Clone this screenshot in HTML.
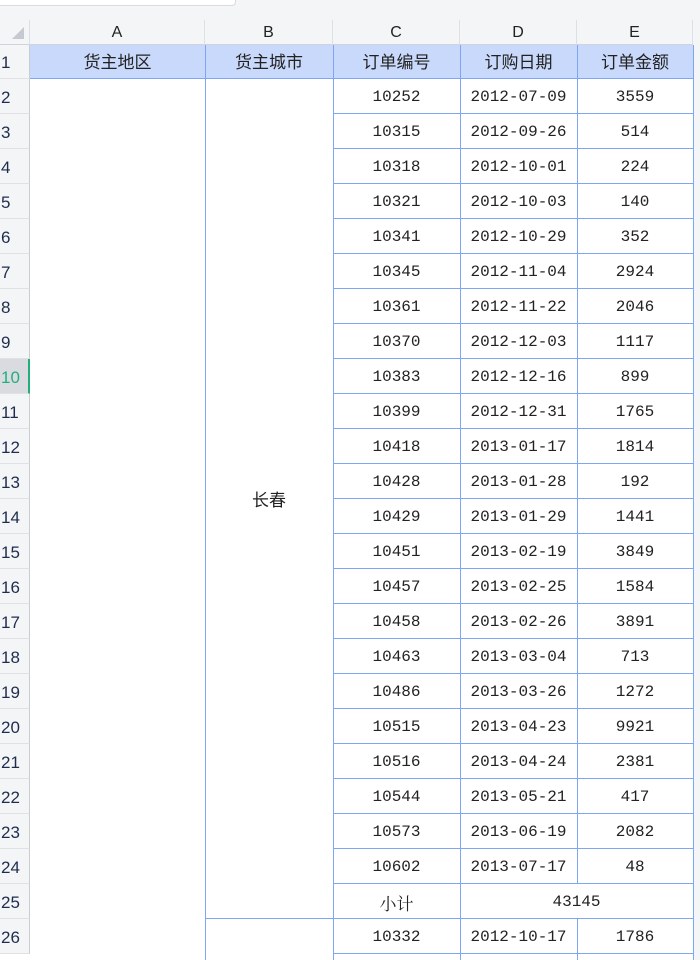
<!DOCTYPE html><html><head><meta charset="utf-8"><style>
html,body{margin:0;width:700px;height:960px;overflow:hidden}
body{background:#fff;position:relative;font-family:"Liberation Sans","Noto Sans CJK SC",sans-serif}
div{position:absolute;box-sizing:border-box}
.rh{left:0;width:30px;height:35px;background:#f4f5f7;border-bottom:1px solid #dfe1e5;border-right:1px solid #c9ccd3;color:#1f2d4d;font-size:17px;line-height:37px;padding-left:1px;overflow:hidden}
.c{text-align:center;font-size:16px;font-family:"Liberation Mono","Noto Sans CJK SC",monospace;color:#222;line-height:37px}
.s{font-family:"Liberation Sans","Noto Sans CJK SC",sans-serif;font-size:17px}
.hl{height:1px;background:#7ea6f4}
.vl{width:1px;background:#7ea6f4}
.ch{top:20px;height:25px;background:#f4f5f7;border-right:1px solid #dcdfe4;border-bottom:1px solid #d0d3d9;text-align:center;font-size:16px;line-height:26px;color:#222}
</style></head><body>
<div style="left:0;top:0;width:700px;height:20px;background:#f4f5f7"></div>
<div style="left:-4px;top:-6px;width:240px;height:12px;border:1px solid #d8dadf;border-radius:4px;background:#fff"></div>
<div class="ch" style="left:0;width:30px"><span style="position:absolute;left:12px;top:7px;width:0;height:0;border-left:12px solid transparent;border-bottom:12px solid #c6c9cf"></span></div>
<div class="ch" style="left:30px;width:175px">A</div>
<div class="ch" style="left:205px;width:128px">B</div>
<div class="ch" style="left:333px;width:127px">C</div>
<div class="ch" style="left:460px;width:117px">D</div>
<div class="ch" style="left:577px;width:116px">E</div>
<div class="ch" style="left:693px;width:7px;border:none"></div>
<div style="left:30px;top:45px;width:663px;height:34px;background:#c9d9fb"></div>
<div class="c s" style="left:30px;top:45px;width:175px;line-height:36px">货主地区</div>
<div class="c s" style="left:205px;top:45px;width:128px;line-height:36px">货主城市</div>
<div class="c s" style="left:333px;top:45px;width:127px;line-height:36px">订单编号</div>
<div class="c s" style="left:460px;top:45px;width:117px;line-height:36px">订购日期</div>
<div class="c s" style="left:577px;top:45px;width:116px;line-height:36px">订单金额</div>
<div class="rh" style="top:45px;height:34px;line-height:36px">1</div>
<div style="left:693px;top:45px;width:7px;height:915px;background:#f4f5f7"></div>
<div id="g"></div>
<script>
var d=[["10252","2012-07-09","3559"],["10315","2012-09-26","514"],["10318","2012-10-01","224"],["10321","2012-10-03","140"],["10341","2012-10-29","352"],["10345","2012-11-04","2924"],["10361","2012-11-22","2046"],["10370","2012-12-03","1117"],["10383","2012-12-16","899"],["10399","2012-12-31","1765"],["10418","2013-01-17","1814"],["10428","2013-01-28","192"],["10429","2013-01-29","1441"],["10451","2013-02-19","3849"],["10457","2013-02-25","1584"],["10458","2013-02-26","3891"],["10463","2013-03-04","713"],["10486","2013-03-26","1272"],["10515","2013-04-23","9921"],["10516","2013-04-24","2381"],["10544","2013-05-21","417"],["10573","2013-06-19","2082"],["10602","2013-07-17","48"]];
var h='';
for(var k=2;k<=26;k++){var t=79+(k-2)*35;
h+='<div class="rh" style="top:'+t+'px;'+(k==10?'background:#d9dbe0;color:#22b07a;border-right:2px solid #22b07a':'')+'">'+k+'</div>';}
for(var i=0;i<d.length;i++){var t=79+i*35;
h+='<div class="c" style="left:333px;top:'+t+'px;width:127px">'+d[i][0]+'</div><div class="c" style="left:460px;top:'+t+'px;width:117px">'+d[i][1]+'</div><div class="c" style="left:577px;top:'+t+'px;width:116px">'+d[i][2]+'</div>';
h+='<div class="hl" style="left:333px;width:360px;top:'+(t+34)+'px"></div>';}
h+='<div class="c" style="left:333px;top:884px;width:127px;font-family:\'Noto Serif CJK SC\',serif;font-size:17px">小计</div><div class="c" style="left:460px;top:884px;width:233px">43145</div>';
h+='<div class="c" style="left:333px;top:919px;width:127px">10332</div><div class="c" style="left:460px;top:919px;width:117px">2012-10-17</div><div class="c" style="left:577px;top:919px;width:116px">1786</div>';
h+='<div class="hl" style="left:205px;width:488px;top:918px"></div><div class="hl" style="left:333px;width:360px;top:953px"></div>';
h+='<div class="hl" style="left:30px;width:663px;top:78px"></div>';
h+='<div class="vl" style="left:205px;top:45px;height:915px"></div><div class="vl" style="left:333px;top:45px;height:915px"></div>';
h+='<div class="vl" style="left:460px;top:45px;height:915px"></div><div class="vl" style="left:577px;top:45px;height:839px"></div><div class="vl" style="left:577px;top:919px;height:41px"></div><div class="vl" style="left:693px;top:45px;height:915px"></div>';
h+='<div class="c s" style="left:205px;top:482px;width:128px">长春</div>';
document.getElementById('g').outerHTML=h;
</script>
</body></html>
